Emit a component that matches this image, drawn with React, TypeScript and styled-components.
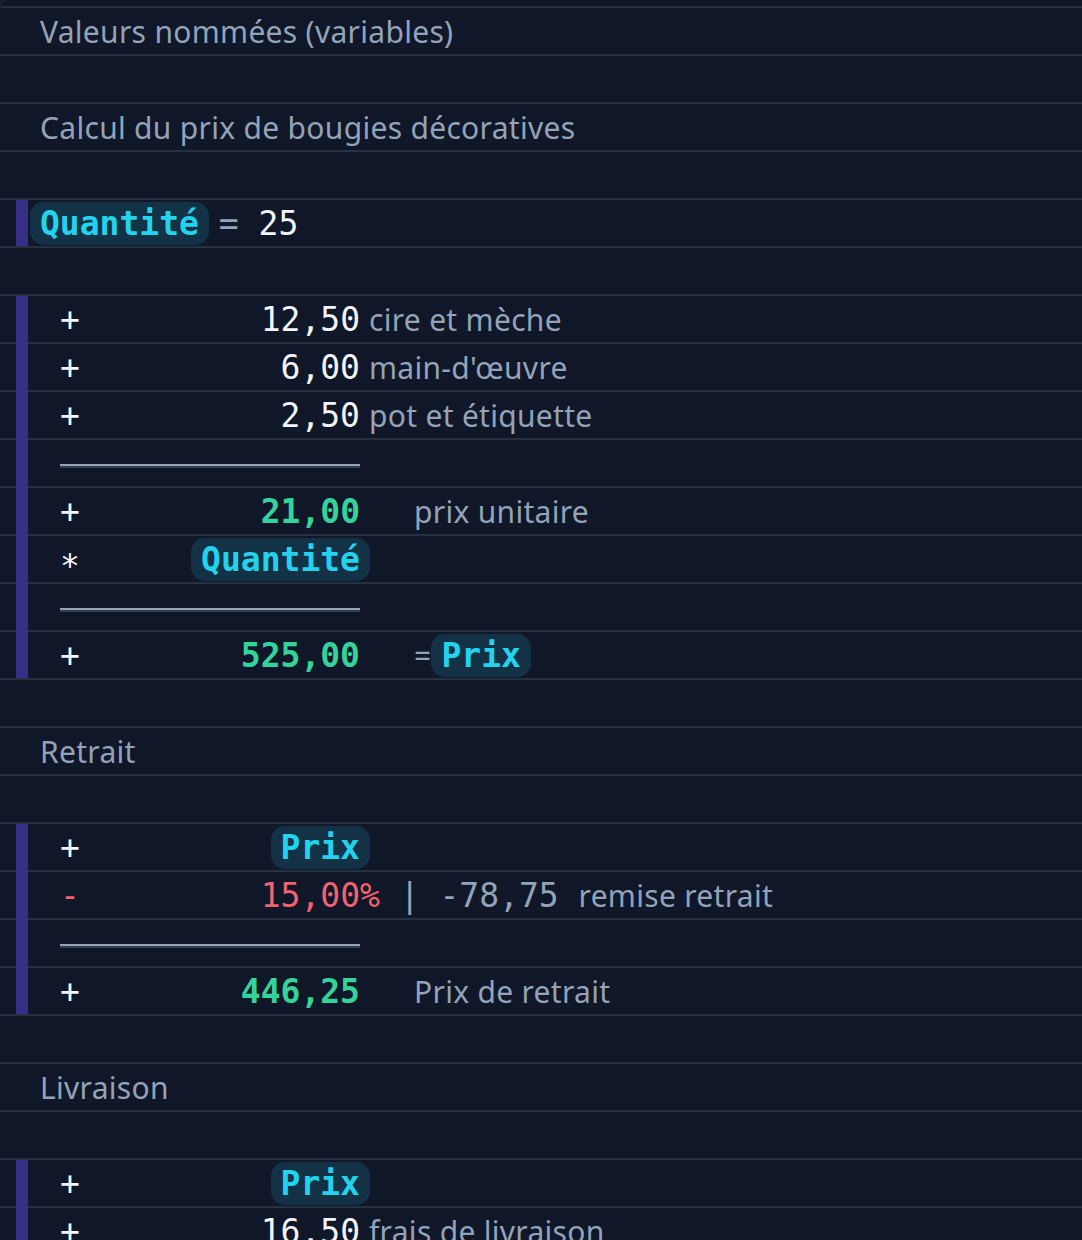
import React from "react"
import styled, { createGlobalStyle } from "styled-components"

const colors = {
  page: "#181e2d",
  sheet: "#0f1729",
  line: "#263041",
  text: "#94a3b8",
  number: "#f1f5f9",
  total: "#34d399",
  name: "#22d3ee",
  nameBg: "#133246",
  minus: "#f2636f",
  bar: "#372f86",
}

const sans = `"Noto Sans", "Open Sans", sans-serif`
const mono = `"DejaVu Sans Mono", "Liberation Mono", monospace`

const GlobalStyle = createGlobalStyle`
  html, body {
    margin: 0;
    background: ${colors.page};
    overflow: hidden;
  }
`

const Sheet = styled.div`
  background-color: ${colors.sheet};
  background-image: repeating-linear-gradient(
    to bottom,
    ${colors.line} 0 2px,
    transparent 2px 48px
  );
  background-position: 0 6px;
  background-repeat: repeat-x;
  border-top-left-radius: 10px;
  padding-top: 6px;
  min-height: 1240px;
`

const Row = styled.div`
  height: 48px;
  box-sizing: border-box;
  padding-top: 2px;
  display: flex;
  align-items: center;
`

const Note = styled(Row)`
  padding-left: 40px;
  font-family: ${sans};
  font-size: 30px;
  letter-spacing: 0.3px;
  color: ${colors.text};
`

// a calculation block: indigo bar down the left, over the row lines inside it
const Block = styled.div`
  background: linear-gradient(${colors.bar}, ${colors.bar}) no-repeat 16px 2px /
    12px calc(100% - 2px);
`

const Line = styled(Row)<{ $indent?: number }>`
  padding-left: ${(p) => p.$indent ?? 60}px;
  font-family: ${mono};
  font-size: 33px;
  color: ${colors.number};
  white-space: pre;
`

const Op = styled.span<{ $minus?: boolean }>`
  width: 20px;
  text-align: center;
  color: ${(p) => (p.$minus ? colors.minus : colors.number)};
`

const Value = styled.span<{ $tone?: "total" | "minus" }>`
  width: 280px;
  display: flex;
  justify-content: flex-end;
  color: ${(p) =>
    p.$tone === "total" ? colors.total : p.$tone === "minus" ? colors.minus : colors.number};
  font-weight: ${(p) => (p.$tone === "total" ? 700 : 400)};
`

const Label = styled.span<{ $gap?: number }>`
  margin-left: ${(p) => p.$gap ?? 9}px;
  font-family: ${sans};
  font-size: 30px;
  letter-spacing: 0.3px;
  color: ${colors.text};
  display: flex;
  align-items: center;
`

const Muted = styled.span<{ $tone?: "minus" }>`
  color: ${(p) => (p.$tone === "minus" ? colors.minus : colors.text)};
`

// named value chip; $flush lets the chip's padding hang outside the text column
const Name = styled.span<{ $flush?: "both" | "right" }>`
  display: inline-flex;
  align-items: center;
  height: 43px;
  padding: 0 10px;
  border-radius: 14px;
  background: ${colors.nameBg};
  color: ${colors.name};
  font-family: ${mono};
  font-size: 33px;
  font-weight: 700;
  letter-spacing: 0;
  margin-left: ${(p) => (p.$flush === "both" ? -10 : 0)}px;
  margin-right: ${(p) => (p.$flush ? -10 : 0)}px;
`

const Rule = styled(Row)`
  padding-left: 60px;
  padding-top: 8px;
  &::after {
    content: "";
    width: 300px;
    height: 2px;
    background: ${colors.text};
    border-bottom: 2px solid #343d50;
  }
`

const Empty = styled(Row)``

const App = () => {
  return (
    <>
      <GlobalStyle />
      <Sheet>
        <Note>Valeurs nommées (variables)</Note>
        <Empty />
        <Note>Calcul du prix de bougies décoratives</Note>
        <Empty />

        <Block>
          <Line $indent={40}>
            <Name $flush="both">Quantité</Name>
            <Muted> = </Muted>25
          </Line>
        </Block>
        <Empty />

        <Block>
          <Line>
            <Op>+</Op>
            <Value>12,50</Value>
            <Label>cire et mèche</Label>
          </Line>
          <Line>
            <Op>+</Op>
            <Value>6,00</Value>
            <Label>main-d'œuvre</Label>
          </Line>
          <Line>
            <Op>+</Op>
            <Value>2,50</Value>
            <Label>pot et étiquette</Label>
          </Line>
          <Rule />
          <Line>
            <Op>+</Op>
            <Value $tone="total">21,00</Value>
            <Label $gap={54}>prix unitaire</Label>
          </Line>
          <Line>
            <Op>∗</Op>
            <Value>
              <Name $flush="right">Quantité</Name>
            </Value>
          </Line>
          <Rule />
          <Line>
            <Op>+</Op>
            <Value $tone="total">525,00</Value>
            <Label $gap={54}>
              =<Name>Prix</Name>
            </Label>
          </Line>
        </Block>
        <Empty />

        <Note>Retrait</Note>
        <Empty />

        <Block>
          <Line>
            <Op>+</Op>
            <Value>
              <Name $flush="right">Prix</Name>
            </Value>
          </Line>
          <Line>
            <Op $minus>-</Op>
            <Value $tone="minus">15,00</Value>
            <Muted $tone="minus">%</Muted>
            <Muted> | -78,75 </Muted>
            <Label $gap={0}>remise retrait</Label>
          </Line>
          <Rule />
          <Line>
            <Op>+</Op>
            <Value $tone="total">446,25</Value>
            <Label $gap={54}>Prix de retrait</Label>
          </Line>
        </Block>
        <Empty />

        <Note>Livraison</Note>
        <Empty />

        <Block>
          <Line>
            <Op>+</Op>
            <Value>
              <Name $flush="right">Prix</Name>
            </Value>
          </Line>
          <Line>
            <Op>+</Op>
            <Value>16,50</Value>
            <Label>frais de livraison</Label>
          </Line>
        </Block>
      </Sheet>
    </>
  )
}

export default App
